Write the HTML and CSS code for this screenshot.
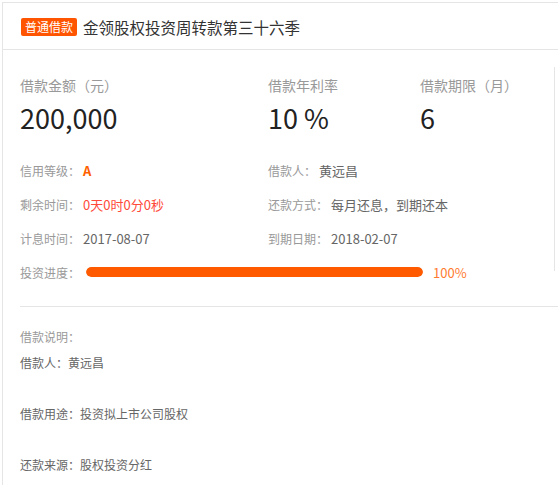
FILE: index.html
```html
<!DOCTYPE html>
<html lang="zh-CN">
<head>
  <meta charset="UTF-8" />
  <meta name="viewport" content="width=device-width, initial-scale=1" />
  <title>金领股权投资周转款第三十六季</title>
  <link rel="stylesheet" href="styles.css">
</head>
<body>
  <div class="loan">
    <div class="loan-head">
      <span class="tag">普通借款</span>
      <h1>金领股权投资周转款第三十六季</h1>
    </div>

    <div class="info">
      <div class="stats">
        <div class="stat">
          <div class="stat-label">借款金额（元）</div>
          <div class="stat-value">200,000</div>
        </div>
        <div class="stat">
          <div class="stat-label">借款年利率</div>
          <div class="stat-value">10 %</div>
        </div>
        <div class="stat">
          <div class="stat-label">借款期限（月）</div>
          <div class="stat-value">6</div>
        </div>
      </div>

      <div class="details">
        <div class="row"><span class="label">信用等级：</span><span class="grade">A</span></div>
        <div class="row"><span class="label">借款人：</span><span class="value">黄远昌</span></div>
        <div class="row"><span class="label">剩余时间：</span><span class="countdown">0天0时0分0秒</span></div>
        <div class="row"><span class="label">还款方式：</span><span class="value">每月还息，到期还本</span></div>
        <div class="row"><span class="label">计息时间：</span><span class="value">2017-08-07</span></div>
        <div class="row"><span class="label">到期日期：</span><span class="value">2018-02-07</span></div>
      </div>

      <div class="progress">
        <span class="label">投资进度：</span>
        <div class="bar"><div class="bar-fill" style="width: 100%"></div></div>
        <span class="percent">100%</span>
      </div>
    </div>

    <div class="desc">
      <p class="desc-title">借款说明：</p>
      <p>借款人：黄远昌</p>
      <p>借款用途：投资拟上市公司股权</p>
      <p>还款来源：股权投资分红</p>
    </div>
  </div>
</body>
</html>
```

FILE: styles.css
```css
body {
  margin: 0;
  font-family: "Noto Sans CJK SC", sans-serif;
  background: #fff;
  color: #333;
  overflow: hidden;
}
.loan {
  margin: 2px 0 0 2px;
  min-height: 482px;
  border-top: 1px solid #e5e5e5;
  border-left: 1px solid #e5e5e5;
}
.loan-head {
  display: flex;
  align-items: center;
  height: 47px;
  padding: 2px 0 0 18px;
  box-sizing: border-box;
  border-bottom: 1px solid #e5e5e5;
}
.tag {
  background: #ff5500;
  color: #fff;
  font-size: 12px;
  line-height: 18px;
  padding: 0 4px;
  border-radius: 2px;
}
h1 {
  margin: 0 0 0 6px;
  font-size: 15.5px;
  font-weight: normal;
  color: #333;
}
.info {
  position: relative;
  width: 535px;
  margin: 17px 0 0 17px;
}
/* right divider of the summary block */
.info::after {
  content: "";
  position: absolute;
  right: 0;
  top: 0;
  width: 1px;
  height: 204px;
  background: #e5e5e5;
}
.stats {
  display: grid;
  grid-template-columns: 248px 152px 1fr;
  padding-top: 8px;
  margin-bottom: 18px;
}
.stat-label {
  font-size: 14px;
  line-height: 20px;
  color: #999;
}
.stat-value {
  margin-top: 6px;
  font-size: 27px;
  line-height: 34px;
  color: #222;
}
.details {
  display: grid;
  grid-template-columns: 248px 1fr;
}
.row, .progress {
  display: flex;
  align-items: center;
  height: 34px;
  font-size: 13px;
}
.label {
  font-size: 12px;
  color: #999;
  margin-right: 3px;
}
.value {
  color: #666;
}
.grade {
  color: #ff6000;
  font-weight: bold;
}
.countdown {
  color: #ff4a3a;
}
.bar {
  width: 337px;
  height: 10px;
  margin-left: 3px;
  border-radius: 5px;
  background: #eee;
  overflow: hidden;
}
.bar-fill {
  height: 100%;
  background: #ff5a00;
  border-radius: 5px;
}
.percent {
  margin-left: 10px;
  color: #ff7a30;
}
.desc {
  margin: 17px 0 0 17px;
  padding-top: 17px;
  border-top: 1px solid #e5e5e5;
}
.desc p {
  margin: 0 0 25px;
  font-size: 12px;
  line-height: 26px;
  color: #666;
}
.desc .desc-title {
  margin-bottom: 0;
  color: #999;
}
```
